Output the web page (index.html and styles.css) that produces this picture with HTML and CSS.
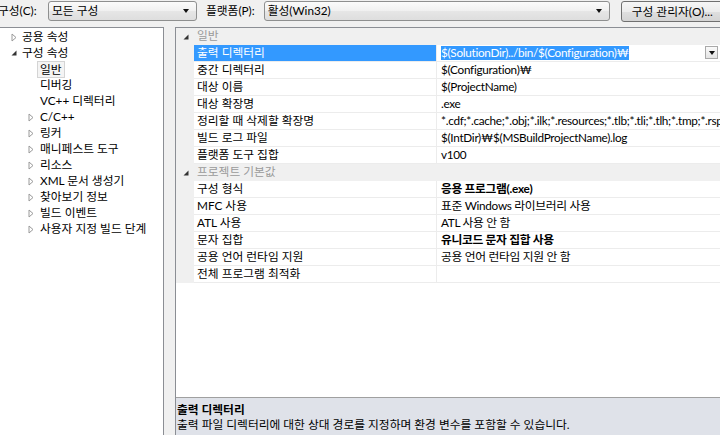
FILE: index.html
```html
<!DOCTYPE html>
<html lang="ko">
<head>
    <meta charset="UTF-8">
    <title>속성 페이지</title>
    <link rel="stylesheet" href="styles.css">
</head>
<body>
    <div class="toolbar">
        <span class="tb-label first">구성(C):</span>
        <div class="combo combo-config"><span>모든 구성</span><i class="arrow"></i></div>
        <span class="tb-label second">플랫폼(P):</span>
        <div class="combo combo-platform"><span>활성(Win32)</span><i class="arrow"></i></div>
        <button class="btn">구성 관리자(O)...</button>
    </div>

    <div class="main">
        <ul class="tree">
            <li class="lv0"><span class="tw"><svg width="6" height="9"><path d="M1 1 L5 4.5 L1 8 Z" fill="none" stroke="#9a9a9a"/></svg></span>공용 속성</li>
            <li class="lv0"><span class="tw"><svg width="6" height="6"><path d="M5.5 0.5 L5.5 5.5 L0.5 5.5 Z" fill="#333"/></svg></span>구성 속성</li>
            <li class="lv1"><span class="tw"></span><span class="picked">일반</span></li>
            <li class="lv1"><span class="tw"></span>디버깅</li>
            <li class="lv1"><span class="tw"></span>VC++ 디렉터리</li>
            <li class="lv1"><span class="tw"><svg width="6" height="9"><path d="M1 1 L5 4.5 L1 8 Z" fill="none" stroke="#9a9a9a"/></svg></span>C/C++</li>
            <li class="lv1"><span class="tw"><svg width="6" height="9"><path d="M1 1 L5 4.5 L1 8 Z" fill="none" stroke="#9a9a9a"/></svg></span>링커</li>
            <li class="lv1"><span class="tw"><svg width="6" height="9"><path d="M1 1 L5 4.5 L1 8 Z" fill="none" stroke="#9a9a9a"/></svg></span>매니페스트 도구</li>
            <li class="lv1"><span class="tw"><svg width="6" height="9"><path d="M1 1 L5 4.5 L1 8 Z" fill="none" stroke="#9a9a9a"/></svg></span>리소스</li>
            <li class="lv1"><span class="tw"><svg width="6" height="9"><path d="M1 1 L5 4.5 L1 8 Z" fill="none" stroke="#9a9a9a"/></svg></span>XML 문서 생성기</li>
            <li class="lv1"><span class="tw"><svg width="6" height="9"><path d="M1 1 L5 4.5 L1 8 Z" fill="none" stroke="#9a9a9a"/></svg></span>찾아보기 정보</li>
            <li class="lv1"><span class="tw"><svg width="6" height="9"><path d="M1 1 L5 4.5 L1 8 Z" fill="none" stroke="#9a9a9a"/></svg></span>빌드 이벤트</li>
            <li class="lv1"><span class="tw"><svg width="6" height="9"><path d="M1 1 L5 4.5 L1 8 Z" fill="none" stroke="#9a9a9a"/></svg></span>사용자 지정 빌드 단계</li>
        </ul>

        <div class="panel">
            <div class="grid">
                <div class="cat">
                    <span class="gut"><svg width="6" height="6"><path d="M5.5 0.5 L5.5 5.5 L0.5 5.5 Z" fill="#333"/></svg></span>
                    <span class="cat-name">일반</span>
                </div>
                <div class="row selected">
                    <span class="gut"></span>
                    <span class="name">출력 디렉터리</span>
                    <span class="val"><span class="sel-text">$(SolutionDir)../bin/$(Configuration)₩</span><span class="drop"><i class="arrow"></i></span></span>
                </div>
                <div class="row"><span class="gut"></span><span class="name">중간 디렉터리</span><span class="val">$(Configuration)₩</span></div>
                <div class="row"><span class="gut"></span><span class="name">대상 이름</span><span class="val">$(ProjectName)</span></div>
                <div class="row"><span class="gut"></span><span class="name">대상 확장명</span><span class="val">.exe</span></div>
                <div class="row"><span class="gut"></span><span class="name">정리할 때 삭제할 확장명</span><span class="val">*.cdf;*.cache;*.obj;*.ilk;*.resources;*.tlb;*.tli;*.tlh;*.tmp;*.rsp;*.pgc;*.pgd;*.meta</span></div>
                <div class="row"><span class="gut"></span><span class="name">빌드 로그 파일</span><span class="val">$(IntDir)₩$(MSBuildProjectName).log</span></div>
                <div class="row"><span class="gut"></span><span class="name">플랫폼 도구 집합</span><span class="val">v100</span></div>

                <div class="cat">
                    <span class="gut"><svg width="6" height="6"><path d="M5.5 0.5 L5.5 5.5 L0.5 5.5 Z" fill="#333"/></svg></span>
                    <span class="cat-name">프로젝트 기본값</span>
                </div>
                <div class="row"><span class="gut"></span><span class="name">구성 형식</span><span class="val bold">응용 프로그램(.exe)</span></div>
                <div class="row"><span class="gut"></span><span class="name">MFC 사용</span><span class="val">표준 Windows 라이브러리 사용</span></div>
                <div class="row"><span class="gut"></span><span class="name">ATL 사용</span><span class="val">ATL 사용 안 함</span></div>
                <div class="row"><span class="gut"></span><span class="name">문자 집합</span><span class="val bold">유니코드 문자 집합 사용</span></div>
                <div class="row"><span class="gut"></span><span class="name">공용 언어 런타임 지원</span><span class="val">공용 언어 런타임 지원 안 함</span></div>
                <div class="row"><span class="gut"></span><span class="name">전체 프로그램 최적화</span><span class="val"></span></div>
            </div>
            <div class="desc">
                <div class="desc-title">출력 디렉터리</div>
                <div class="desc-text">출력 파일 디렉터리에 대한 상대 경로를 지정하며 환경 변수를 포함할 수 있습니다.</div>
            </div>
        </div>
    </div>
</body>
</html>
```

FILE: styles.css
```css
body {
    margin: 0;
    width: 720px;
    height: 435px;
    overflow: hidden;
    background-color: #f0f0f0;
    font-family: Lato, "Noto Sans CJK KR", sans-serif;
    font-size: 11.75px;
    color: #000;
}

/* top bar */
.toolbar {
    height: 27px;
    display: flex;
    align-items: flex-start;
    padding-top: 1px;
    box-sizing: border-box;
    white-space: nowrap;
}

.tb-label {
    line-height: 20px;
    margin: 0 5px 0 9px;
}

.tb-label.first {
    margin-left: -2px;
    width: 46px;
    margin-right: 4px;
    flex: none;
}

.tb-label.second {
    margin-right: 9px;
}

.combo {
    height: 20px;
    flex: none;
    box-sizing: border-box;
    border: 1px solid #8e8f8f;
    border-radius: 3px;
    background: linear-gradient(#fbfbfb, #f0f0f0 50%, #e6e6e6 51%, #dedede);
    display: flex;
    align-items: center;
    justify-content: space-between;
    padding: 0 7px 0 3px;
    line-height: 18px;
}

.combo-config {
    width: 149px;
}

.combo-platform {
    width: 346px;
}

.arrow {
    display: block;
    width: 0;
    height: 0;
    border-left: 3.5px solid transparent;
    border-right: 3.5px solid transparent;
    border-top: 4px solid #111;
}

.btn {
    margin-left: 11px;
    height: 21px;
    width: 106px;
    flex: none;
    border: 1px solid #707070;
    border-radius: 3px;
    background: linear-gradient(#f6f6f6, #ececec 50%, #dfdfdf 51%, #d4d4d4);
    font-family: inherit;
    font-size: 11.75px;
    padding: 0 0 0 10px;
    text-align: left;
    line-height: 18px;
}

/* main area */
.main {
    display: flex;
    height: 408px;
}

.tree {
    list-style: none;
    margin: 0;
    padding: 1px 0 0 0;
    width: 164px;
    flex: none;
    box-sizing: border-box;
    background-color: #fff;
    border-top: 1px solid #8b8e94;
    border-right: 1px solid #8b8e94;
    overflow: hidden;
}

.tree li {
    height: 16px;
    line-height: 16px;
    display: flex;
    align-items: center;
    white-space: nowrap;
}

.tree .lv0 {
    padding-left: 11px;
}

.tree .lv1 {
    padding-left: 28px;
}

.tw {
    width: 11px;
    flex: none;
    display: flex;
    align-items: center;
}

.tree .lv1 .tw {
    width: 12px;
}

.picked {
    margin-left: -3px;
    padding: 0 2px;
    border: 1px solid #d4d4d4;
    background-color: #f4f4f4;
    line-height: 15px;
}

.panel {
    margin-left: 11px;
    flex: 1;
    min-width: 0;
    display: flex;
    flex-direction: column;
    background-color: #fff;
    border-top: 1px solid #8b8e94;
    border-left: 1px solid #8b8e94;
}

.grid {
    flex: 1;
}

.cat, .row {
    display: flex;
    height: 17px;
    line-height: 16px;
    white-space: nowrap;
}

.gut {
    width: 18px;
    flex: none;
    background-color: #f0f0f0;
    display: flex;
    align-items: center;
    justify-content: center;
    padding-left: 2px;
    box-sizing: border-box;
}

.cat {
    background-color: #f0f0f0;
}

.cat-name {
    padding-left: 3px;
    color: #9a9a9a;
}

.row .name {
    width: 243px;
    flex: none;
    box-sizing: border-box;
    padding-left: 3px;
    border-right: 1px solid #ececec;
    border-bottom: 1px solid #ececec;
}

.row .val {
    flex: 1;
    min-width: 0;
    overflow: hidden;
    padding-left: 4px;
    border-bottom: 1px solid #ececec;
    display: flex;
    align-items: center;
    position: relative;
    letter-spacing: -0.3px;
}

.val.bold {
    font-weight: bold;
}

.row.selected .name {
    background-color: #3399ff;
    color: #fff;
}

.sel-text {
    background-color: #3399ff;
    color: #fff;
    line-height: 14px;
}

.drop {
    position: absolute;
    right: 2px;
    top: 1px;
    width: 13px;
    height: 13px;
    box-sizing: border-box;
    border: 1px solid #a9a9a9;
    background: linear-gradient(#fafafa, #e4e4e4);
    display: flex;
    align-items: center;
    justify-content: center;
}

.desc {
    height: 38px;
    box-sizing: border-box;
    border-top: 1px solid #a0a0a0;
    background-color: #dfe2e9;
    padding: 4px 0 0 1px;
    line-height: 15px;
    white-space: nowrap;
}

.desc-title {
    font-weight: bold;
}
```
